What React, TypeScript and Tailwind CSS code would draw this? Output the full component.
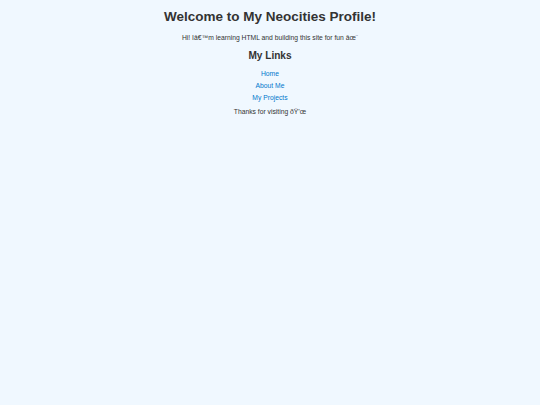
import React from 'react';

const links = ['Home', 'About Me', 'My Projects'];

export default function App() {
  return (
    <div className="min-h-screen bg-[#f0f8ff] text-[#333] text-center font-['Liberation_Sans',Arial,sans-serif] text-[6.75px] pt-[9px]">
      <h1 className="text-[13.5px] font-bold leading-[15.5px] mb-[9px]">Welcome to My Neocities Profile!</h1>
      <p className="leading-[7.8px]">Hi! Iâ€™m learning HTML and building this site for fun âœ¨</p>
      <h2 className="text-[10.1px] font-bold leading-[11.6px] mt-[8.4px] mb-[8.4px]">My Links</h2>
      <ul className="flex flex-col gap-[4.2px]">
        {links.map((l) => (
          <li key={l} className="leading-[7.8px]">
            <a href="#" className="text-[#0077cc]">{l}</a>
          </li>
        ))}
      </ul>
      <p className="leading-[7.8px] mt-[6.6px]">Thanks for visiting ðŸ’œ</p>
    </div>
  );
}
